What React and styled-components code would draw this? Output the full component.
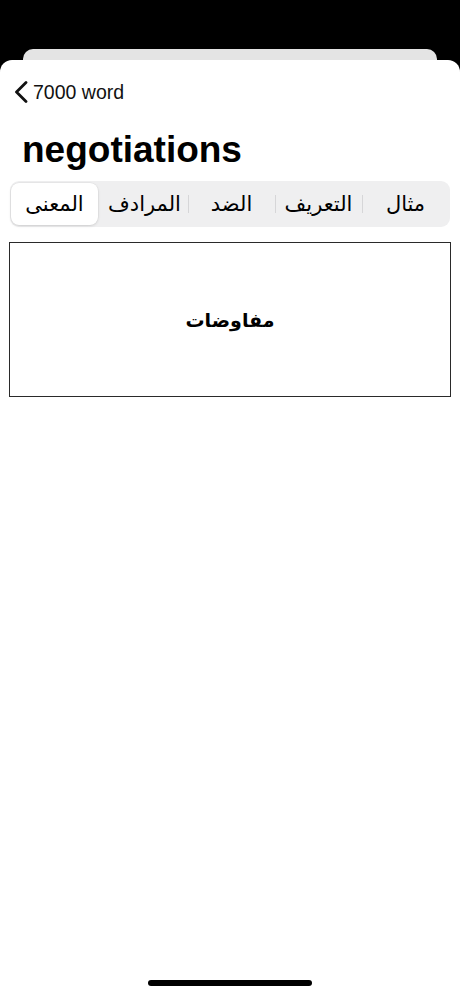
import React, { useState } from "react";
import styled, { createGlobalStyle } from "styled-components";

const Global = createGlobalStyle`
  html, body { margin: 0; padding: 0; background: #000; }
  body { font-family: "Liberation Sans", "DejaVu Sans", sans-serif; }
  #root { min-height: 996px; }
`;

const Screen = styled.div`
  width: 460px;
  height: 996px;
  background: #000;
  display: flex;
  flex-direction: column;
  overflow: hidden;
  position: relative;
`;

const BackCard = styled.div`
  margin: 49px 23px 0;
  height: 11px;
  background: #e4e4e4;
  border-radius: 10px 10px 0 0;
  flex-shrink: 0;
`;

const Sheet = styled.div`
  flex: 1;
  background: #fff;
  border-radius: 12px 12px 0 0;
  display: flex;
  flex-direction: column;
  padding: 0 9px;
`;

const NavRow = styled.div`
  display: flex;
  align-items: center;
  height: 44px;
  margin-top: 10px;
  padding-left: 4px;
  gap: 4px;
  color: #111;
  font-size: 19.5px;
`;

const Title = styled.h1`
  margin: 14px 0 0 13px;
  font-size: 37px;
  font-weight: 700;
  line-height: 44px;
  color: #000;
  letter-spacing: 0;
`;

const Segmented = styled.div`
  margin: 9px 1px 0;
  height: 46px;
  background: #efeff0;
  border-radius: 9px;
  display: flex;
  padding: 2px 1px;
  box-sizing: border-box;
`;

const Segment = styled.div`
  flex: 1;
  display: flex;
  align-items: center;
  justify-content: center;
  position: relative;
  font-family: "DejaVu Sans", sans-serif;
  font-size: 21px;
  color: #000;
  border-radius: 8px;
  cursor: pointer;
  margin-right: ${(p) => (p.$active ? "3px" : "0")};
  background: ${(p) => (p.$active ? "#fff" : "transparent")};
  box-shadow: ${(p) =>
    p.$active ? "0 1px 3px rgba(0,0,0,0.12), 0 0 0 0.5px rgba(0,0,0,0.05)" : "none"};
  &::before {
    content: "";
    position: absolute;
    left: 0;
    top: 12px;
    bottom: 12px;
    width: 1px;
    background: ${(p) => (p.$divider ? "#d6d6d8" : "transparent")};
  }
`;

const MeaningBox = styled.div`
  margin-top: 15px;
  height: 155px;
  border: 1px solid #2a2a2a;
  display: flex;
  align-items: center;
  justify-content: center;
  font-family: "DejaVu Sans", sans-serif;
  font-weight: 700;
  font-size: 19px;
  color: #000;
  box-sizing: border-box;
`;

const Spacer = styled.div`
  flex: 1;
`;

const HomeBar = styled.div`
  align-self: center;
  width: 164px;
  height: 6px;
  border-radius: 3px;
  background: #000;
  margin-bottom: 10px;
`;

const Chevron = () => (
  <svg width="16" height="22" viewBox="0 0 16 22" fill="none">
    <path d="M13 1.5 L3.5 11 L13 20.5" stroke="#111" strokeWidth="2.8" strokeLinecap="round" strokeLinejoin="round" />
  </svg>
);

const tabs = ["المعنى", "المرادف", "الضد", "التعريف", "مثال"];

export default function App() {
  const [active, setActive] = useState(0);
  return (
    <>
      <Global />
      <Screen>
        <BackCard />
        <Sheet>
          <NavRow>
            <Chevron />
            <span>7000 word</span>
          </NavRow>
          <Title>negotiations</Title>
          <Segmented>
            {tabs.map((t, i) => (
              <Segment
                key={t}
                $active={i === active}
                $divider={i > 0 && i !== active && i - 1 !== active}
                onClick={() => setActive(i)}
              >
                {t}
              </Segment>
            ))}
          </Segmented>
          <MeaningBox>مفاوضات</MeaningBox>
          <Spacer />
          <HomeBar />
        </Sheet>
      </Screen>
    </>
  );
}
